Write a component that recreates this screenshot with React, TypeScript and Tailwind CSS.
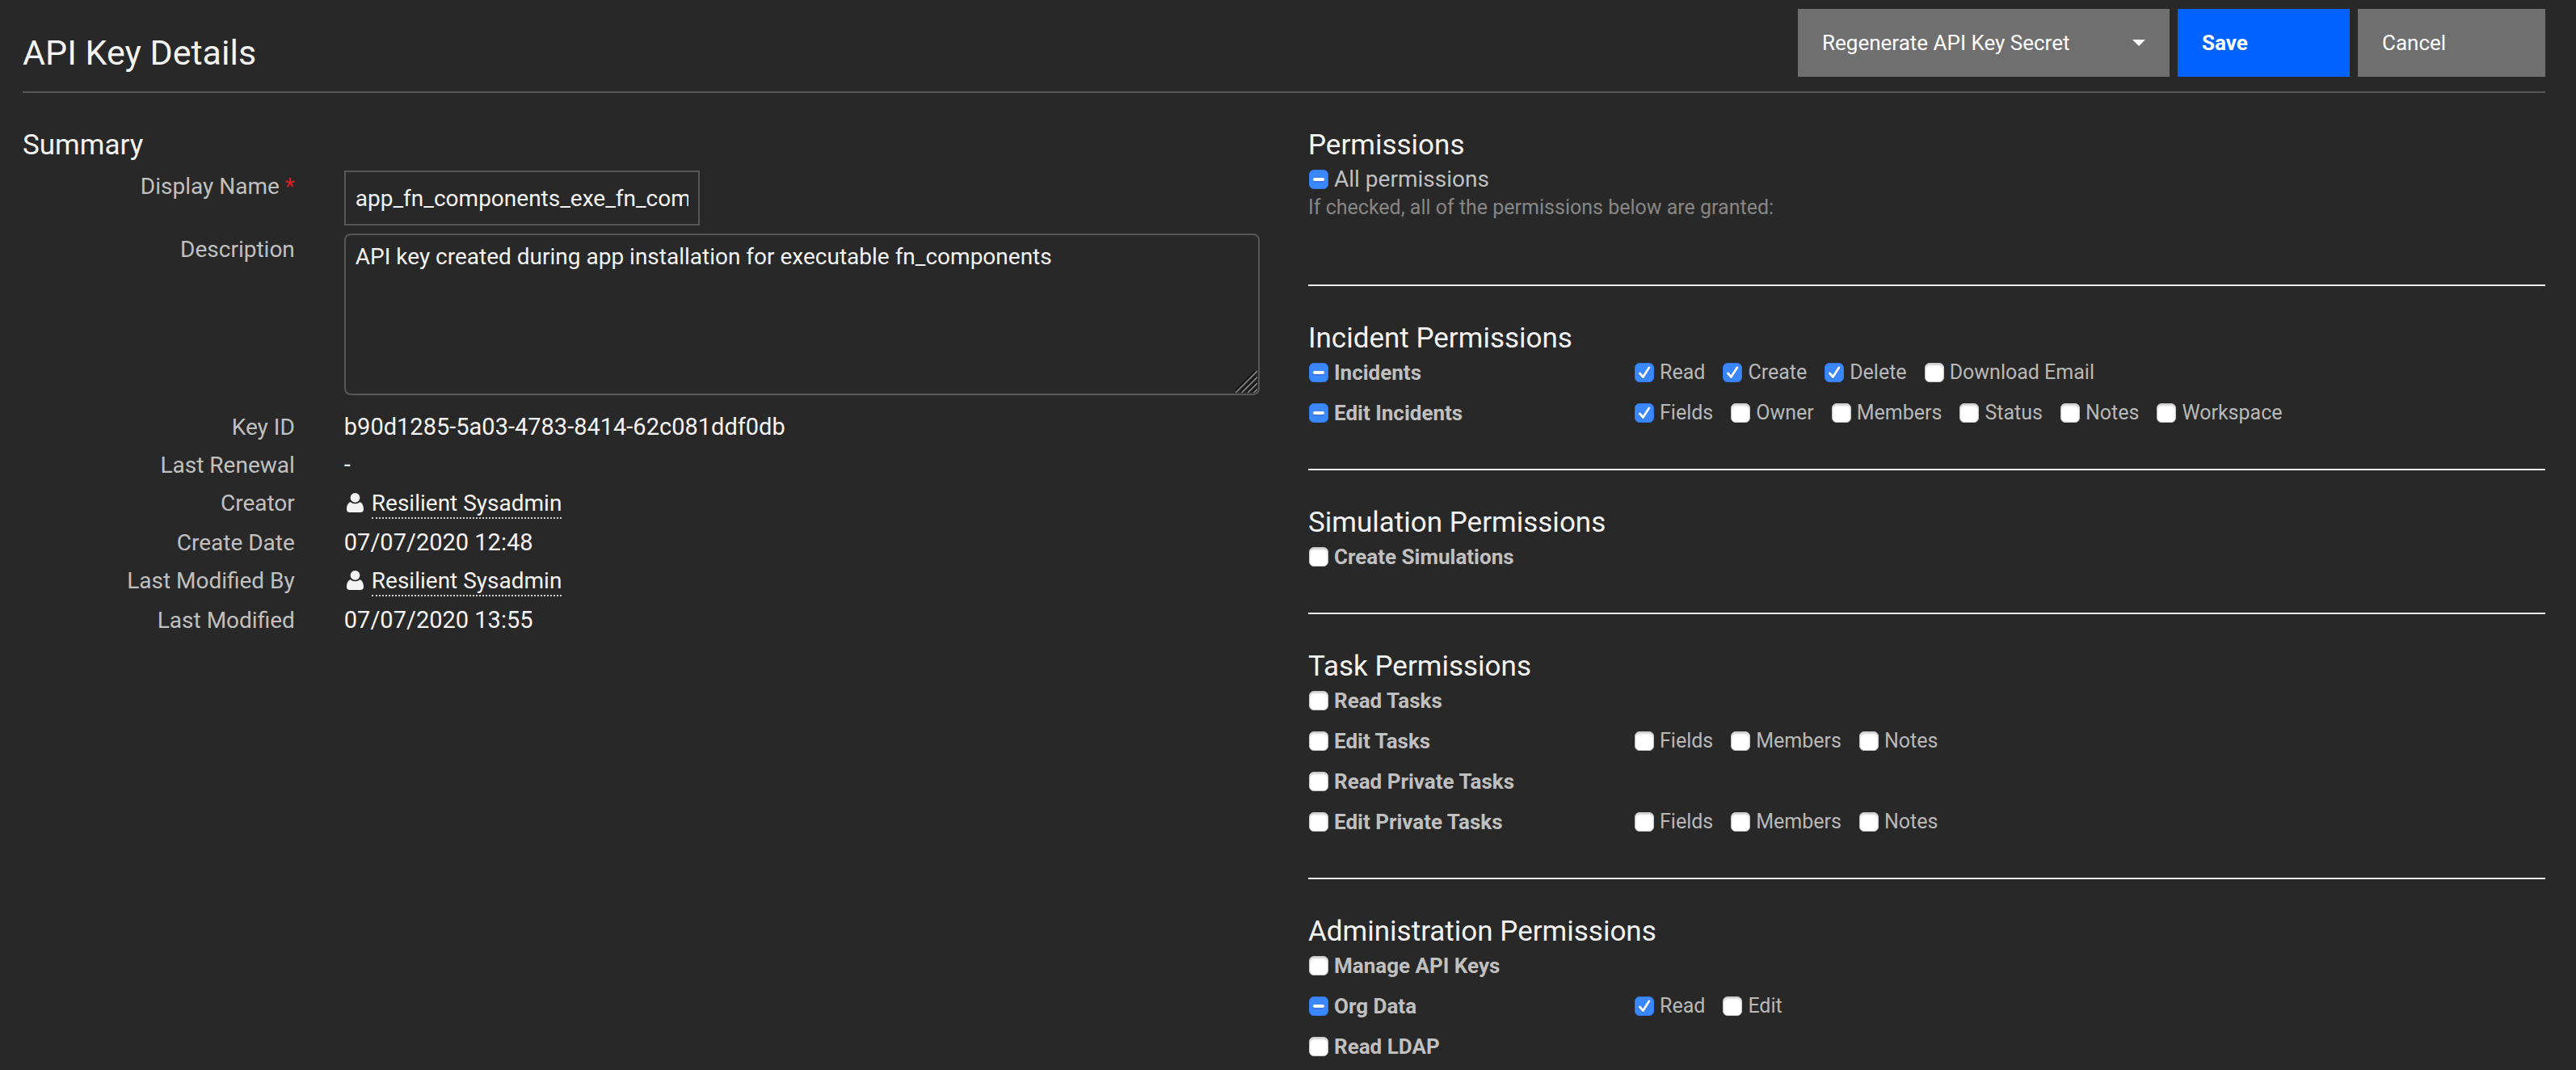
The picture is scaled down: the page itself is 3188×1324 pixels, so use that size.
import { useCallback, useId, type ReactNode } from "react";

type State = "on" | "off" | "mixed";

type Option = { label: string; state: State };
type Row = Option & { options?: Option[] };
type Section = { title: string; rows: Row[] };

const on = (label: string): Option => ({ label, state: "on" });
const off = (label: string): Option => ({ label, state: "off" });

const SECTIONS: Section[] = [
  {
    title: "Incident Permissions",
    rows: [
      {
        label: "Incidents",
        state: "mixed",
        options: [on("Read"), on("Create"), on("Delete"), off("Download Email")],
      },
      {
        label: "Edit Incidents",
        state: "mixed",
        options: [on("Fields"), off("Owner"), off("Members"), off("Status"), off("Notes"), off("Workspace")],
      },
    ],
  },
  { title: "Simulation Permissions", rows: [off("Create Simulations")] },
  {
    title: "Task Permissions",
    rows: [
      off("Read Tasks"),
      { ...off("Edit Tasks"), options: [off("Fields"), off("Members"), off("Notes")] },
      off("Read Private Tasks"),
      { ...off("Edit Private Tasks"), options: [off("Fields"), off("Members"), off("Notes")] },
    ],
  },
  {
    title: "Administration Permissions",
    rows: [
      off("Manage API Keys"),
      { label: "Org Data", state: "mixed", options: [on("Read"), off("Edit")] },
      off("Read LDAP"),
    ],
  },
];

function Checkbox({ label, state, className }: Option & { className: string }) {
  const id = useId();
  const setMixed = useCallback(
    (el: HTMLInputElement | null) => {
      if (el) el.indeterminate = state === "mixed";
    },
    [state],
  );
  return (
    <span className="flex h-[42px] items-center gap-[7px]">
      <span className="relative ml-px size-6 shrink-0">
        <input
          id={id}
          ref={setMixed}
          type="checkbox"
          defaultChecked={state === "on"}
          className="peer block size-6 appearance-none rounded-[6px] border border-[#c8c8c8] bg-white shadow-[inset_0_2px_2px_rgba(0,0,0,0.18)] checked:border-[#2f78ee] checked:bg-[#3b87fd] checked:shadow-none indeterminate:border-[#2f78ee] indeterminate:bg-[#3b87fd] indeterminate:shadow-none"
        />
        <svg
          viewBox="0 0 24 24"
          className="pointer-events-none absolute inset-0 hidden size-6 peer-checked:block peer-indeterminate:hidden"
          fill="none"
          strokeLinecap="round"
          strokeLinejoin="round"
        >
          <path d="M6.5 14.2 10.4 18.8 17.8 7.2" stroke="#2463c4" strokeOpacity="0.5" strokeWidth="2.8" />
          <path d="M6.5 13 10.4 17.6 17.8 6" stroke="#fff" strokeWidth="2.8" />
        </svg>
        <svg
          viewBox="0 0 24 24"
          className="pointer-events-none absolute inset-0 hidden size-6 peer-indeterminate:block"
        >
          <rect x="5" y="11.5" width="14" height="4" rx="2" fill="#2463c4" fillOpacity="0.5" />
          <rect x="5" y="10" width="14" height="4" rx="2" fill="#fff" />
        </svg>
      </span>
      <label htmlFor={id} className={className}>
        {label}
      </label>
    </span>
  );
}

function Field({ label, htmlFor, required, children }: { label: string; htmlFor: string; required?: boolean; children: ReactNode }) {
  return (
    <div className="flex">
      <label htmlFor={htmlFor} className="w-[22%] text-right leading-10 text-[#c0c0c0]">
        {label}
        {required && <span className="text-[#da1e28]"> *</span>}
      </label>
      <div className="w-[78%] pl-[61px]">{children}</div>
    </div>
  );
}

function Detail({ label, children }: { label: string; children: ReactNode }) {
  return (
    <div className="flex leading-[47px]">
      <dt className="w-[22%] text-right text-[#c0c0c0]">{label}</dt>
      <dd className="w-[78%] pl-[61px]">{children}</dd>
    </div>
  );
}

function Digits({ children }: { children: ReactNode }) {
  return <span className="block text-[29px] leading-[47px]">{children}</span>;
}

function UserLink({ name }: { name: string }) {
  return (
    <span className="flex items-start gap-[10px] pb-[2px] pl-[3px]">
      <svg viewBox="0 0 21 24" className="mt-[11px] h-6 w-[21px] shrink-0" fill="#f3f3f3">
        <path d="M4.8 11.2C2 11.6 0 15.5 0 20.3 0 22.8 1.5 24 3.6 24H17.4C19.5 24 21 22.8 21 20.3 21 15.5 19 11.6 16.2 11.2 14.7 12.5 12.7 13.3 10.5 13.3 8.3 13.3 6.3 12.5 4.8 11.2Z" />
        <circle cx="10.5" cy="5.9" r="5.9" />
      </svg>
      <span>
        <a href="#user" className="border-b-2 border-dotted border-[#d0d0d0] pb-px">
          {name}
        </a>
      </span>
    </span>
  );
}

export default function App() {
  return (
    <main className="min-h-screen overflow-hidden bg-[#282828] pr-[38px] pl-7 font-[Roboto,'Liberation_Sans',sans-serif] text-[28px] text-[#f3f3f3]">
      <header className="flex items-end justify-between border-b-2 border-[#565656] pt-[11px] pb-[18px]">
        <h1 className="text-[43px] leading-[60px]">API Key Details</h1>
        <div className="flex gap-[10px] text-[26px]">
          <button type="button" className="flex h-[84px] w-[460px] items-center justify-between bg-[#6f6f6f] px-[30px] text-white">
            Regenerate API Key Secret
            <svg viewBox="0 0 16 8" className="h-2 w-4" fill="#fff">
              <path d="M0 0H16L8 8Z" />
            </svg>
          </button>
          <button type="button" className="h-[84px] w-[213px] bg-[#0062ff] px-[30px] text-left font-bold text-white">
            Save
          </button>
          <button type="button" className="h-[84px] w-[232px] bg-[#6f6f6f] px-[30px] text-left text-white">
            Cancel
          </button>
        </div>
      </header>

      <div className="grid grid-cols-2 gap-[60px] pt-11">
        <section>
          <h2 className="text-[35px] leading-[42px]">Summary</h2>
          <div className="flex flex-col gap-[10px] pt-[10px]">
            <Field label="Display Name" htmlFor="display-name" required>
              <input
                id="display-name"
                type="text"
                defaultValue="app_fn_components_exe_fn_components"
                className="block h-[68px] w-[440px] border-2 border-[#565656] bg-transparent px-3"
              />
            </Field>
            <Field label="Description" htmlFor="description">
              <div className="relative">
                <textarea
                  id="description"
                  defaultValue="API key created during app installation for executable fn_components"
                  className="block h-[200px] w-full resize-none rounded-lg border-2 border-[#565656] bg-transparent px-3 py-2 leading-[38px]"
                />
                <svg viewBox="0 0 27 27" className="pointer-events-none absolute right-[3px] bottom-[3px] size-[27px]" fill="none">
                  <path d="M-1 26 26 -1M6.5 26 26 6.5M14 26 26 14M21.5 26 26 21.5" stroke="#141414" strokeWidth="3" />
                  <path d="M0 27 27 0M7.5 27 27 7.5M15 27 27 15M22.5 27 27 22.5" stroke="#8f8f8f" strokeWidth="1.5" />
                </svg>
              </div>
            </Field>
          </div>
          <dl className="pt-4">
            <Detail label="Key ID">
              <Digits>b90d1285-5a03-4783-8414-62c081ddf0db</Digits>
            </Detail>
            <Detail label="Last Renewal">
              <Digits>-</Digits>
            </Detail>
            <Detail label="Creator">
              <UserLink name="Resilient Sysadmin" />
            </Detail>
            <Detail label="Create Date">
              <Digits>07/07/2020 12:48</Digits>
            </Detail>
            <Detail label="Last Modified By">
              <UserLink name="Resilient Sysadmin" />
            </Detail>
            <Detail label="Last Modified">
              <Digits>07/07/2020 13:55</Digits>
            </Detail>
          </dl>
        </section>

        <div>
          <section className="pb-[81px]">
            <h2 className="text-[35px] leading-[42px]">Permissions</h2>
            <Checkbox label="All permissions" state="mixed" className="text-[28px] text-[#c0c0c0]" />
            <p className="text-[25px] leading-[28px] text-[#868686]">
              If checked, all of the permissions below are granted:
            </p>
          </section>
          {SECTIONS.map((section) => (
            <section key={section.title} className="border-t-2 border-[#ededed] pt-11 pb-12 last:pb-0">
              <h2 className="text-[35px] leading-[42px]">{section.title}</h2>
              <div className="flex flex-col gap-2">
                {section.rows.map((row) => (
                  <div key={row.label} className="grid grid-cols-[403px_1fr]">
                    <Checkbox label={row.label} state={row.state} className="text-[26px] font-bold text-[#c0c0c0]" />
                    <div className="flex gap-[21px]">
                      {row.options?.map((option) => (
                        <Checkbox key={option.label} {...option} className="text-[25px] text-[#b8b8b8]" />
                      ))}
                    </div>
                  </div>
                ))}
              </div>
            </section>
          ))}
        </div>
      </div>
    </main>
  );
}
